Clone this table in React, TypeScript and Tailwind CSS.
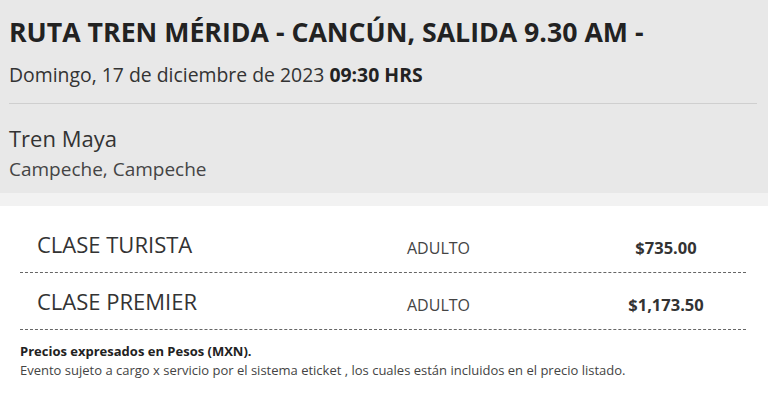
import React from "react";

type Row = { clase: string; tipo: string; precio: string };

const rows: Row[] = [
  { clase: "CLASE TURISTA", tipo: "ADULTO", precio: "$735.00" },
  { clase: "CLASE PREMIER", tipo: "ADULTO", precio: "$1,173.50" },
];

export default function App() {
  return (
    <div
      className="w-[768px] h-[401px] bg-white text-[#333] overflow-hidden"
      style={{ fontFamily: '"Open Sans", "Liberation Sans", sans-serif' }}
    >
      <div className="bg-[#e8e8e8] h-[193px] pl-[9px] pr-[11px] pt-[14px]">
        <h1 className="text-[26.7px] leading-[36px] font-bold text-[#222]">
          RUTA TREN MÉRIDA - CANCÚN, SALIDA 9.30 AM -
        </h1>
        <div className="text-[19.4px] leading-[28px] mt-[11px] pb-[14px] border-b border-[#cfcfcf]">
          Domingo, 17 de diciembre de 2023 <b className="text-[#222]">09:30 HRS</b>
        </div>
        <div className="text-[22px] leading-[30px] mt-[19px] text-[#333]">Tren Maya</div>
        <div className="text-[19px] leading-[28px] mt-[2px] text-[#444]">Campeche, Campeche</div>
      </div>
      <div className="h-[13px] bg-[#f2f2f2]" />

      <div className="px-[20px] pt-[10px]">
        {rows.map((r) => (
          <div
            key={r.clase}
            className="flex items-start h-[57px] w-[726px] border-b border-dashed border-[#666]"
          >
            <div className="w-[387px] pl-[17px] pt-[13px] text-[22px] leading-[30px] text-[#333]">
              {r.clase}
            </div>
            <div className="w-[200px] pt-[20px] text-[16px] leading-[24px] text-[#444]">{r.tipo}</div>
            <div className="w-[118px] pt-[20px] text-center text-[16.5px] leading-[24px] font-bold text-[#333]">
              {r.precio}
            </div>
          </div>
        ))}
        <div className="pt-[12px] text-[13px] leading-[19px]">
          <div className="font-bold text-[#222]">Precios expresados en Pesos (MXN).</div>
          <div className="text-[#444]">
            Evento sujeto a cargo x servicio por el sistema eticket , los cuales están incluidos en el precio listado.
          </div>
        </div>
      </div>
    </div>
  );
}
